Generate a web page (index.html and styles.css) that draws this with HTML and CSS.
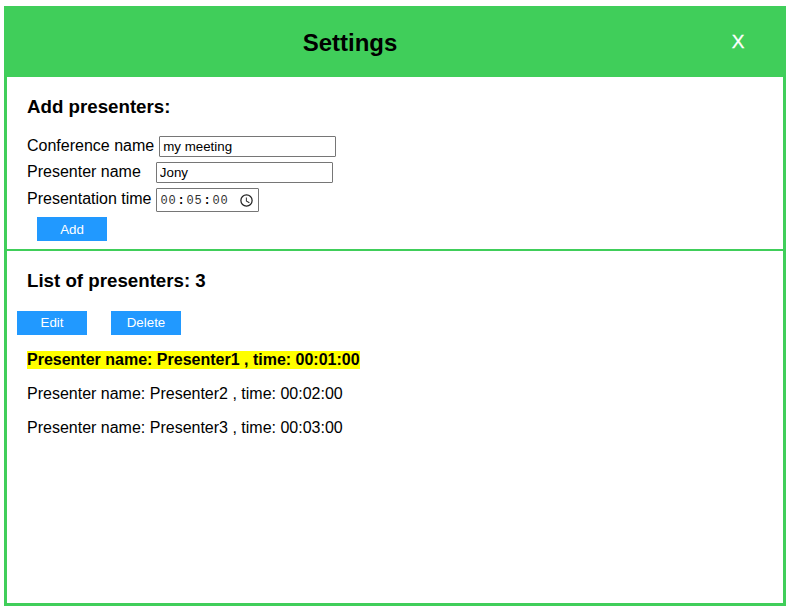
FILE: index.html
```html
<!DOCTYPE html>
<html lang="en">
<head>
<meta charset="utf-8">
<title>Settings</title>
<link rel="stylesheet" href="styles.css">
</head>
<body>
<main class="window">
  <header class="header">
    <h1 class="title">Settings</h1>
    <button class="close" type="button">X</button>
  </header>
  <section class="add">
    <h2 class="heading">Add presenters:</h2>
    <div class="field conference"><label>Conference name</label><input class="text" value="my meeting"></div>
    <div class="field presenter"><label>Presenter name</label><input class="text" value="Jony"></div>
    <div class="field duration"><label>Presentation time</label>
      <div class="time"><span>00</span><span class="colon">:</span><span>05</span><span class="colon">:</span><span>00</span>
        <svg class="clock" viewBox="0 0 24 24"><path d="M12 2a10 10 0 1 0 0 20 10 10 0 0 0 0-20zm0 18a8 8 0 1 1 0-16 8 8 0 0 1 0 16zm.5-13H11v6l5.2 3.2.8-1.3-4.500-2.700z"/></svg>
      </div>
    </div>
    <button class="btn add-btn" type="button">Add</button>
  </section>
  <section class="list">
    <h2 class="heading">List of presenters: 3</h2>
    <div class="actions"><button class="btn" type="button">Edit</button><button class="btn" type="button">Delete</button></div>
    <p class="row"><span class="selected">Presenter name: Presenter1 , time: 00:01:00</span></p>
    <p class="row">Presenter name: Presenter2 , time: 00:02:00</p>
    <p class="row">Presenter name: Presenter3 , time: 00:03:00</p>
  </section>
</main>
</body>
</html>
```
FILE: styles.css
```css
* { box-sizing: border-box; }
body { margin: 0; background: #fff; color: #000; font: 16px/18px "Liberation Sans", Arial, sans-serif; }
.window { width: 782px; height: 600px; margin: 6px 0 0 4px; border: 3px solid #40ce5a; }
.header { height: 68px; background: #40ce5a; display: grid; grid-template-columns: 686px 90px; }
.title { margin: 20px 0 0; font-size: 24px; line-height: 28px; text-align: center; }
.close { width: 90px; height: 65px; padding: 0; border: 0; background: none; color: #fff; font: 19px "Liberation Sans", Arial, sans-serif; -webkit-text-stroke: .3px #fff; }
.add { height: 174px; padding: 19px 20px 0; border-bottom: 2px solid #40ce5a; }
.heading { margin: 0; font-size: 18.72px; line-height: 21px; }
.field { display: flex; align-items: flex-start; height: 26px; }
.conference { margin-top: 19px; gap: 5px; }
.presenter { gap: 15px; }
.duration { gap: 4px; height: 29px; }
.field label { padding-top: 1px; }
.duration label { padding-top: 2px; }
.text { width: 177px; height: 21px; margin: 0; padding: 1px 3px; border: 1px solid #767676; border-radius: 1px; font: 13.333px "Liberation Sans", Arial, sans-serif; }
.time { display: flex; align-items: center; width: 103px; height: 24px; padding: 1px 0 0 4px; border: 1px solid #767676; border-radius: 1px; color: #333; font: 12px "Liberation Mono", monospace; letter-spacing: .8px; }
.colon { width: 10px; text-align: center; color: #000; font-weight: bold; }
.clock { width: 15px; height: 15px; margin: -1px 0 0 10px; fill: #222; }
.btn { width: 70px; height: 24px; padding: 0 0 1px; border: 0; background: #2199ff; color: #fff; font: 13.333px "Liberation Sans", Arial, sans-serif; }
.add-btn { display: block; margin-left: 10px; padding: 0; }
.list { padding: 19px 20px; }
.actions { display: flex; gap: 24px; margin: 20px 0 16px -10px; }
.row { margin: 0 0 16px; }
.selected { display: inline-block; vertical-align: top; background: #ff0; font-weight: bold; }
```
